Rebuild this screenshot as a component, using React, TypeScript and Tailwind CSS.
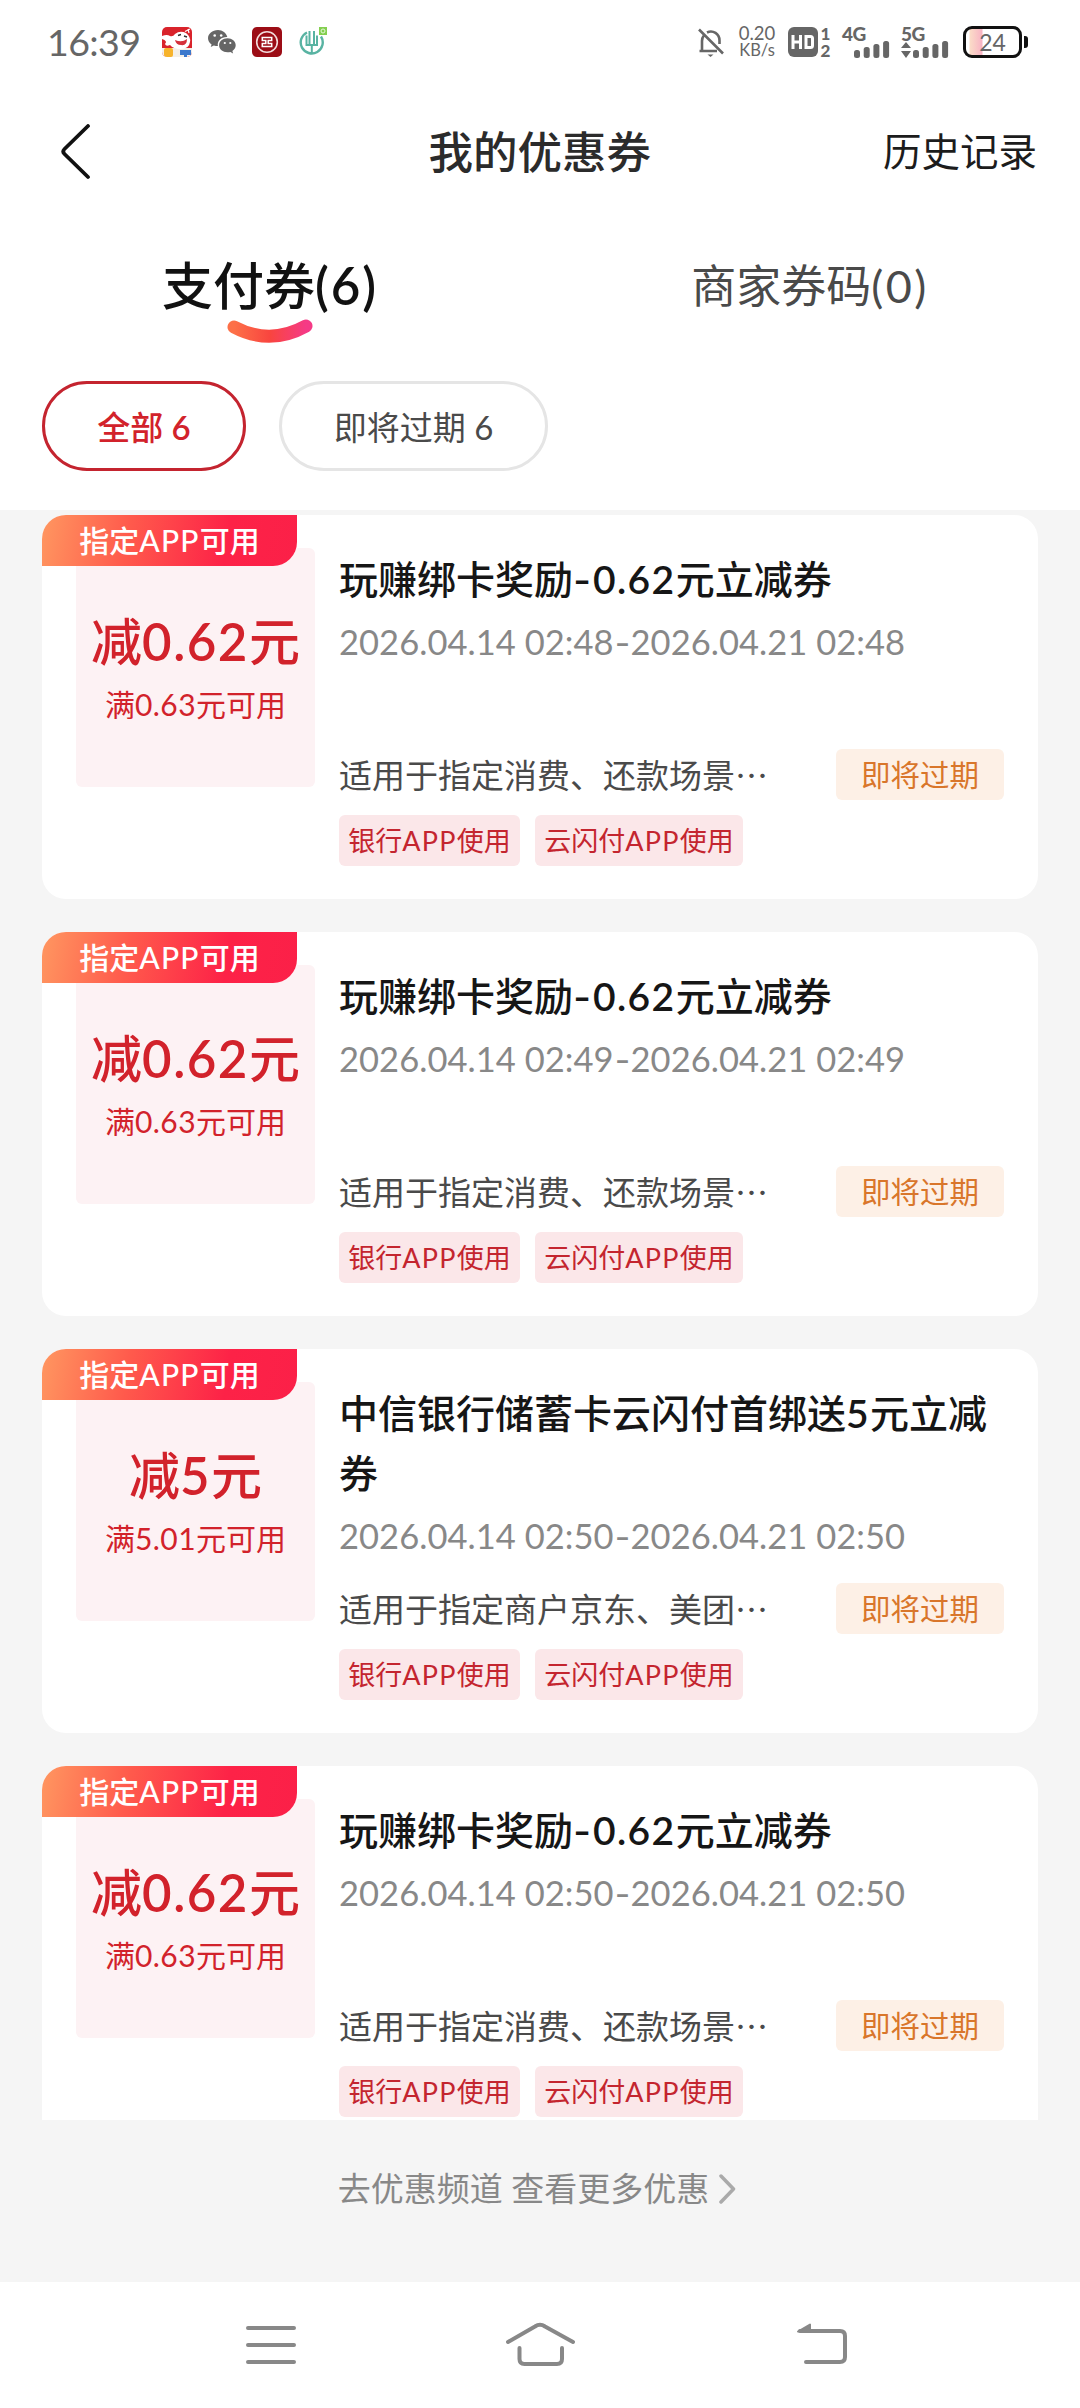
import React from "react";

type Coupon = {
  title: string;
  amount: string;
  condition: string;
  period: string;
  scope: string;
};

const coupons: Coupon[] = [
  {
    title: "玩赚绑卡奖励-0.62元立减券",
    amount: "减0.62元",
    condition: "满0.63元可用",
    period: "2026.04.14 02:48-2026.04.21 02:48",
    scope: "适用于指定消费、还款场景",
  },
  {
    title: "玩赚绑卡奖励-0.62元立减券",
    amount: "减0.62元",
    condition: "满0.63元可用",
    period: "2026.04.14 02:49-2026.04.21 02:49",
    scope: "适用于指定消费、还款场景",
  },
  {
    title: "中信银行储蓄卡云闪付首绑送5元立减券",
    amount: "减5元",
    condition: "满5.01元可用",
    period: "2026.04.14 02:50-2026.04.21 02:50",
    scope: "适用于指定商户京东、美团",
  },
  {
    title: "玩赚绑卡奖励-0.62元立减券",
    amount: "减0.62元",
    condition: "满0.63元可用",
    period: "2026.04.14 02:50-2026.04.21 02:50",
    scope: "适用于指定消费、还款场景",
  },
];

// Gives the Latin letters, digits and signs of a mixed text their own classes.
function Mixed({ text, latin }: { text: string; latin: string }) {
  return (
    <>
      {text.split(/([A-Za-z0-9().:]+|-)/).map((part, i) => {
        if (part === "-") {
          return (
            <span key={i} className={`inline-block origin-center scale-x-125 px-[2px] ${latin}`}>
              -
            </span>
          );
        }
        return /^[A-Za-z0-9().:]/.test(part) ? (
          <span key={i} className={latin}>
            {part}
          </span>
        ) : (
          part
        );
      })}
    </>
  );
}

function SignalBars() {
  return (
    <svg width="36" height="17" viewBox="0 0 36 17" fill="#666">
      <rect x="0" y="9" width="6" height="8" rx="2.5" />
      <rect x="9.7" y="6" width="6" height="11" rx="2.5" />
      <rect x="19.4" y="3" width="6" height="14" rx="2.5" />
      <rect x="29.1" y="0" width="6" height="17" rx="2.5" />
    </svg>
  );
}

function StatusBar() {
  return (
    <header className="flex h-[84px] items-center justify-between pl-[47px] pr-[52px] text-[#666]">
      <div className="flex items-center">
        <span className="w-[115px] text-[37.5px] leading-[40px] tracking-[-0.6px]">16:39</span>
        <svg width="30" height="30" viewBox="0 0 30 30">
          <defs>
            <clipPath id="jd">
              <rect width="30" height="30" rx="5" />
            </clipPath>
          </defs>
          <g clipPath="url(#jd)">
            <rect width="30" height="30" fill="#d9232b" />
            <rect y="21" width="30" height="9" fill="#f4efe8" />
            <path d="M0 9 Q5 7 8 9 Q11 10 13 7 Q18 3 24 6 Q29 10 28 15 Q27 22 19 22 Q11 22 8 18 Q4 20 3 17 Q6 14 0 12Z" fill="#fff" />
            <path d="M13 13 Q20 16 25 12 Q25 19 19 18 Q14 18 13 13Z" fill="#d5303a" />
            <path d="M16 8.500 l3-1 M22 9 l3 1" stroke="#333" strokeWidth="1.400" />
            <path d="M23 4.500 l5-2.500 M26 2 l1 4" stroke="#fff" strokeWidth="1.200" />
            <rect x="2" y="21" width="9" height="9" rx="2" fill="#f7b32b" />
            <path d="M18 23 h11 v5 h-4 v3 h-3 v-3 h-4z" fill="#3c78cc" />
          </g>
        </svg>
        <svg className="ml-[16px]" width="28" height="24" viewBox="0 0 28 24" fill="#666">
          <path d="M10 0C4.300 0 0 3.700 0 8.200c0 2.600 1.400 4.700 3.600 6.200L2.700 17l3.200-1.600c1.200.4 2.600.6 4 .6-.9-5 3.200-9.200 9.400-9C18.300 3 14.600 0 10 0Z" />
          <path d="M19.500 8.300c-4.800 0-8.400 3.100-8.400 7s3.600 7 8.400 7c1 0 2-.1 2.900-.4l2.700 1.500-.7-2.400c2-1.300 3.300-3.300 3.300-5.700 0-3.900-3.700-7-8.200-7Z" />
          <g fill="#fff">
            <circle cx="6.700" cy="5.500" r="1.300" />
            <circle cx="13.200" cy="5.500" r="1.300" />
            <circle cx="16.800" cy="13" r="1.100" />
            <circle cx="22.300" cy="13" r="1.100" />
          </g>
        </svg>
        <svg className="ml-[16px]" width="30" height="30" viewBox="0 0 30 30" fill="none">
          <rect width="30" height="30" rx="5" fill="#9c0d16" />
          <circle cx="15" cy="15" r="10.300" stroke="#f3dcdc" strokeWidth="1.600" />
          <path d="M9.500 10.500h11M9.500 19.500h11M10.300 10.500v3h3.500v3h-3.500v3M19.700 10.500v3h-3.500v3h3.500v3" stroke="#fff" strokeWidth="1.500" />
        </svg>
        <svg className="ml-[17px]" width="28" height="30" viewBox="0 0 28 30" fill="none">
          <path d="M22 9.500A11 11 0 1 1 8 5.500" stroke="#58b3a2" strokeWidth="2.400" />
          <path d="M7.500 8.500v9.500h10.500V8.500M10.500 4v14M15 4v14M12.800 18v8" stroke="#58b3a2" strokeWidth="2" />
          <rect x="20" y="0" width="8" height="8" fill="#84cf50" />
          <circle cx="24" cy="4" r="2" stroke="#e5f8d9" />
        </svg>
      </div>
      <div className="flex items-center">
        <svg width="26" height="30" viewBox="0 0 26 30" fill="none" stroke="#666" strokeWidth="2.600">
          <path d="M4 24V14c0-2 .6-4 1.800-5.500M9 5.500C15 2.500 21.500 7 21.500 13.500V17M1.500 24H19M1 2.500 25 26.500" />
          <path d="M9.500 27.500h6l-3 2.500Z" fill="#666" stroke="none" />
        </svg>
        <div className="ml-[13px] flex w-[40px] flex-col items-center leading-[17px]">
          <span className="text-[18.5px]">0.20</span>
          <span className="text-[16.5px]">KB/s</span>
        </div>
        <div className="ml-[11px] flex h-[30px] w-[30px] items-center justify-center rounded-[6px] bg-[#666]">
          <svg width="24" height="14" viewBox="0 0 24 14" fill="none" stroke="#fff" strokeWidth="3">
            <path d="M2 0v14M9.500 0v14M2 7h7.500M15 1.500h4.500q2 0 2 2v7q0 2-2 2H15Z" />
          </svg>
        </div>
        <div className="ml-[2px] flex w-[11px] flex-col items-center text-[17px] font-black leading-[17px]">
          <span>1</span>
          <span>2</span>
        </div>
        <div className="ml-[11px] flex h-[32px] w-[50px] flex-col justify-between">
          <span className="text-[19px] font-black leading-[16px] tracking-[-0.5px]">4G</span>
          <div className="-mt-px flex justify-end pr-[2px]">
            <SignalBars />
          </div>
        </div>
        <div className="ml-[9px] flex h-[32px] w-[50px] flex-col justify-between">
          <span className="text-[19px] font-black leading-[16px] tracking-[-0.5px]">5G</span>
          <div className="-mt-px flex items-end justify-between pr-[2px]">
            <svg width="10" height="16" viewBox="0 0 10 16" fill="#666">
              <path d="M5 0 10 6H0ZM5 16 0 9h10Z" />
            </svg>
            <SignalBars />
          </div>
        </div>
        <div className="ml-[12px] flex h-[32px] w-[59px] items-center justify-center rounded-[9px] border-[3px] border-[#111] bg-[linear-gradient(90deg,#fff_3px,#fbdcc8_4px,#f8b4c4_16px,#fff_17px)] text-[23px] leading-none">
          24
        </div>
        <div className="ml-[2px] h-[12px] w-[4px] rounded-r-[3px] bg-[#111]" />
      </div>
    </header>
  );
}

function CouponCard({ coupon }: { coupon: Coupon }) {
  return (
    <article className="relative flex h-[384px] shrink-0 rounded-[24px] bg-white pl-[34px] pr-[34px]">
      <div className="mt-[33px] flex h-[239px] w-[239px] shrink-0 flex-col items-center rounded-[6px] bg-[#fdf2f4] text-[#d2222b]">
        <div className="mt-[64px] whitespace-nowrap text-[51px] font-medium leading-[60px]">
          <Mixed text={coupon.amount} latin="font-semibold tracking-[1.5px]" />
        </div>
        <div className="mt-[12px] whitespace-nowrap text-[30px] leading-[40px]">
          <Mixed text={coupon.condition} latin="tracking-[0.4px]" />
        </div>
      </div>
      <div className="ml-[24px] flex min-w-0 flex-1 flex-col pt-[34px]">
        <h2 className="-mr-2 text-[39px] font-medium leading-[60px] text-[#161616]">
          <Mixed text={coupon.title} latin="font-semibold tracking-[1.4px]" />
        </h2>
        <p className="mt-[11px] whitespace-nowrap text-[34.500px] leading-[44px] text-[#888]">
          <Mixed text={coupon.period} latin="tracking-[0.050px]" />
        </p>
        <div className="mt-auto flex h-[51px] items-center justify-between">
          <p className="whitespace-nowrap text-[33px] leading-[44px] text-[#4a4a4a]">{coupon.scope}⋯</p>
          <span className="flex h-[51px] w-[168px] items-center justify-center rounded-[6px] bg-[#fdf0e6] pt-[2px] text-[29.500px] text-[#d9762b]">
            即将过期
          </span>
        </div>
        <div className="mb-[33px] mt-[15px] flex h-[51px] gap-[15px] whitespace-nowrap text-[27px] text-[#c4252f]">
          <span className="flex w-[181px] items-center justify-center rounded-[6px] bg-[#fbe7e9] pt-[2px]">
            <span>
              <Mixed text="银行APP使用" latin="tracking-[1.300px]" />
            </span>
          </span>
          <span className="flex w-[208px] items-center justify-center rounded-[6px] bg-[#fbe7e9] pt-[2px]">
            <span>
              <Mixed text="云闪付APP使用" latin="tracking-[1.300px]" />
            </span>
          </span>
        </div>
      </div>
      <div className="absolute left-0 top-0 flex h-[51px] w-[255px] items-center justify-center rounded-br-[24px] rounded-tl-[24px] bg-[linear-gradient(100deg,#ff935f_2%,#ff5a4c_34%,#fd2247_72%,#fb2048)] text-[30px] font-medium text-white">
        <span>
          <Mixed text="指定APP可用" latin="tracking-[1.200px]" />
        </span>
      </div>
    </article>
  );
}

export default function App() {
  return (
    <div className="flex h-[2408px] w-[1080px] flex-col overflow-hidden bg-white font-['Lato','Noto_Sans_CJK_SC',sans-serif]">
      <StatusBar />
      <nav className="grid h-[136px] grid-cols-3 items-center pl-[60px] pr-[43px]">
        <svg width="32" height="56" viewBox="0 0 32 56" fill="none" stroke="#111" strokeWidth="3.800" strokeLinecap="round" strokeLinejoin="round">
          <path d="M28 2 4.500 25Q2 27.500 4.500 30L28 53" />
        </svg>
        <h1 className="-ml-[26px] w-[360px] text-center text-[44.500px] font-medium text-[#2b2b2b]">我的优惠券</h1>
        <span className="text-right text-[38.500px] text-[#1c1c1c]">历史记录</span>
      </nav>
      <div className="grid h-[134px] grid-cols-2 pt-[32px] text-center">
        <div className="relative text-[51px] font-medium leading-[68px] text-[#111]">
          <Mixed text="支付券(6)" latin="font-semibold tracking-[2px]" />
          <svg className="absolute left-[227px] top-[66px]" width="86" height="26" viewBox="0 0 86 26" fill="none">
            <defs>
              <linearGradient id="smile" x1="0" x2="1">
                <stop offset="0" stopColor="#fd7048" />
                <stop offset=".5" stopColor="#f9453f" />
                <stop offset="1" stopColor="#f53a86" />
              </linearGradient>
            </defs>
            <path d="M7 9Q43 28 79 8" stroke="url(#smile)" strokeWidth="13" strokeLinecap="round" />
          </svg>
        </div>
        <div className="text-[45px] leading-[68px] text-[#4a4a4a]">
          <Mixed text="商家券码(0)" latin="tracking-[2.500px]" />
        </div>
      </div>
      <div className="flex h-[156px] gap-[33px] pl-[42px] pt-[27px] text-[33px]">
        <button className="flex h-[90px] w-[204px] items-center justify-center rounded-full border-[3px] border-[#c4242f] pt-1 font-medium text-[#d2222b]">
          <span>
            <Mixed text="全部 6" latin="font-semibold" />
          </span>
        </button>
        <button className="flex h-[90px] w-[269px] items-center justify-center rounded-full border-[3px] border-[#e5e5e5] pt-1 text-[#4a4a4a]">
          即将过期 6
        </button>
      </div>
      <main className="flex h-[1772px] flex-col bg-[#f5f5f5] px-[42px] pt-[5px]">
        <div className="flex h-[1605px] flex-col gap-[33px] overflow-hidden">
          {coupons.map((coupon, i) => (
            <CouponCard key={i} coupon={coupon} />
          ))}
        </div>
        <div className="mt-[45px] flex h-[48px] items-center justify-center gap-[10px] pr-[6px] text-[33px] text-[#888]">
          去优惠频道 查看更多优惠
          <svg width="17" height="30" viewBox="0 0 17 30" fill="none" stroke="#aaa" strokeWidth="3.500" strokeLinecap="round" strokeLinejoin="round">
            <path d="M2 2 14.500 15 2 28" />
          </svg>
        </div>
      </main>
      <footer className="flex h-[126px] justify-between px-[230px] pt-[36px]">
        <svg width="82" height="56" viewBox="0 0 82 56" fill="none" stroke="#888" strokeWidth="4" strokeLinecap="round">
          <path d="M18 10H64M18 27H64M18 44H64" />
        </svg>
        <svg width="82" height="56" viewBox="0 0 82 56" fill="none" stroke="#888" strokeWidth="4" strokeLinecap="round" strokeLinejoin="round">
          <path d="M9 24 36 8.500Q41 5 46 8.500L74 24M20.500 30V41Q20.500 46 25.500 46H58Q63 46 63 41V30" />
        </svg>
        <svg width="82" height="56" viewBox="0 0 82 56" fill="none" stroke="#888" strokeWidth="4" strokeLinecap="round" strokeLinejoin="round">
          <path d="M32 13H72Q77 13 77 18V39Q77 44 72 44H38" />
          <path d="M30 13.500 42 6.500V13.500Z" fill="#888" strokeWidth="2" />
        </svg>
      </footer>
    </div>
  );
}
